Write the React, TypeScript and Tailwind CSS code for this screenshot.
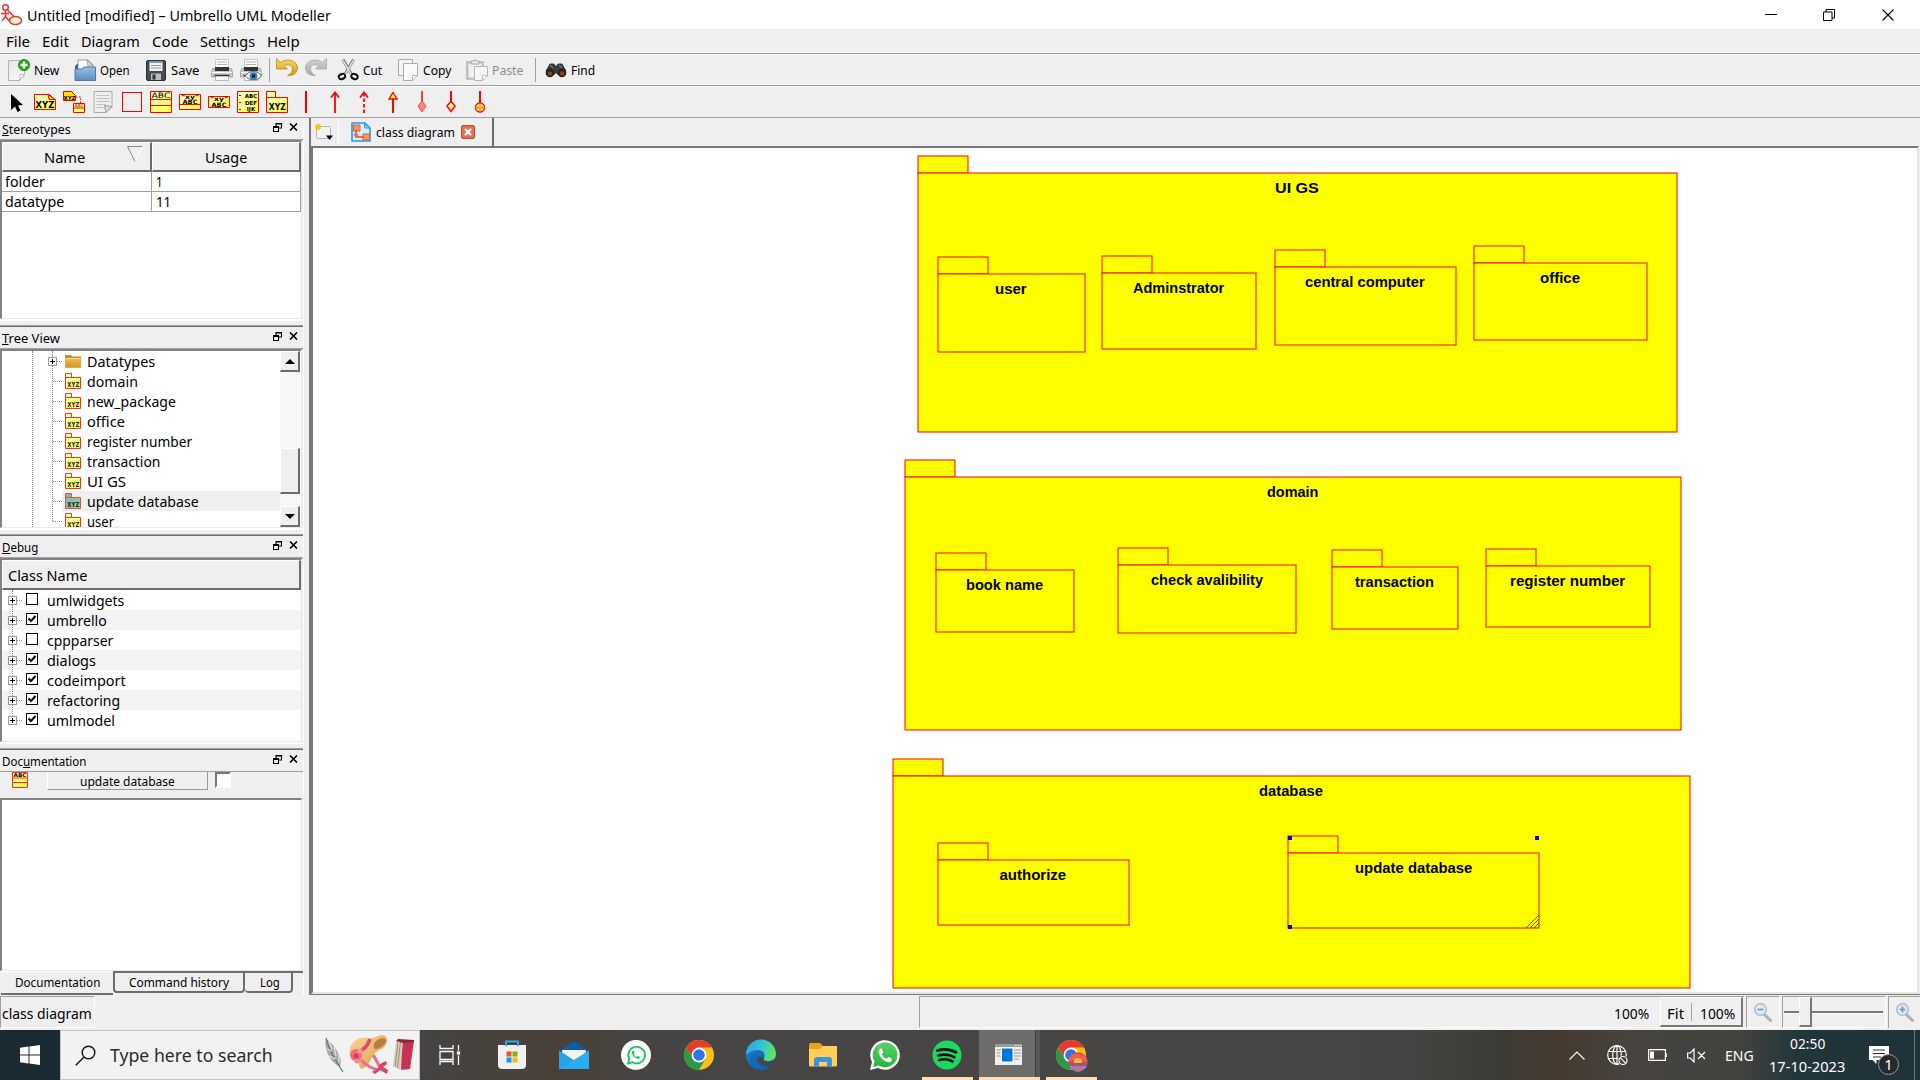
import React, { useLayoutEffect, useRef, useState } from "react";

/* Text set to an exact width, condensed or widened horizontally. */
function Fit({ w, className = "", children }: { w: number; className?: string; children: React.ReactNode }) {
  const ref = useRef<HTMLSpanElement>(null);
  const [scale, setScale] = useState(1);
  useLayoutEffect(() => {
    if (ref.current) setScale(w / ref.current.offsetWidth);
  }, [w]);
  return (
    <span className={"inline-block shrink-0 whitespace-nowrap text-left " + className} style={{ width: w }}>
      <span ref={ref} className="inline-block origin-left" style={{ transform: `scaleX(${scale})` }}>
        {children}
      </span>
    </span>
  );
}

const RED = "#ff0000";
const I = "block shrink-0 overflow-visible";

/* ---------- main toolbar icons ---------- */
const Defs = () => (
  <svg width="0" height="0" className="absolute">
    <defs>
      <linearGradient id="page" x1="0" y1="0" x2="1" y2="1"><stop offset="0" stopColor="#e4e4e4" /><stop offset="1" stopColor="#ffffff" /></linearGradient>
      <linearGradient id="blue" x1="0" y1="0" x2="0" y2="1"><stop offset="0" stopColor="#9dbfe2" /><stop offset="1" stopColor="#5d8cc2" /></linearGradient>
      <linearGradient id="yel" x1="0" y1="0" x2="1" y2="1"><stop offset="0" stopColor="#ffffd0" /><stop offset="1" stopColor="#ffff3c" /></linearGradient>
      <linearGradient id="gold" x1="0" y1="0" x2="0" y2="1"><stop offset="0" stopColor="#f6dc6a" /><stop offset="1" stopColor="#d59a14" /></linearGradient>
      <linearGradient id="silver" x1="0" y1="0" x2="0" y2="1"><stop offset="0" stopColor="#d2d2d2" /><stop offset="1" stopColor="#a8a8a8" /></linearGradient>
      <linearGradient id="fold" x1="0" y1="0" x2="0" y2="1"><stop offset="0" stopColor="#f3b84e" /><stop offset="1" stopColor="#d9951f" /></linearGradient>
      <linearGradient id="sel" x1="0" y1="0" x2="1" y2="1"><stop offset="0" stopColor="#7fb0d0" /><stop offset="1" stopColor="#a4cf78" /></linearGradient>
      <linearGradient id="edge1" x1="0" y1="0" x2="1" y2="0.3"><stop offset="0" stopColor="#2a9fe0" /><stop offset=".6" stopColor="#36c6d0" /><stop offset="1" stopColor="#62e06a" /></linearGradient>
      <linearGradient id="edge2" x1="0" y1="0" x2="1" y2="1"><stop offset="0" stopColor="#1c86d8" /><stop offset="1" stopColor="#0e4f9c" /></linearGradient>
      <linearGradient id="wa" x1="0" y1="0" x2="0" y2="1"><stop offset="0" stopColor="#5bd066" /><stop offset="1" stopColor="#27b43e" /></linearGradient>
      <linearGradient id="hat" x1="0" y1="0" x2="1" y2="1"><stop offset="0" stopColor="#ffd894" /><stop offset="1" stopColor="#d99a4c" /></linearGradient>
    </defs>
  </svg>
);
const NewIcon = () => (
  <svg className={I} width="22" height="22" viewBox="0 0 22 22">
    <path d="M.5 1.5h16v14l-5 6H.5z" fill="url(#page)" stroke="#b4b4b4" />
    <path d="M11.5 21.5l.5-6h4.500z" fill="#fff" stroke="#aaa" strokeWidth=".8" />
    <circle cx="16" cy="6" r="5.600" fill="#22a616" stroke="#158a10" strokeWidth=".8" />
    <path d="M16 2.500v7M12.500 6h7" stroke="#fff" strokeWidth="2.400" />
  </svg>
);
const OpenIcon = () => (
  <svg className={I} width="22" height="22" viewBox="0 0 22 22">
    <path d="M1 21V7l2-2h4v5z" fill="#3f669c" />
    <path d="M4 1h10l5 5v8H4z" fill="#fafafa" stroke="#888" strokeWidth=".8" />
    <path d="M13 1l1 6h5z" fill="#ddd" stroke="#999" strokeWidth=".8" />
    <path d="M1 10h7l2-2h11.500v13.500H1z" fill="url(#blue)" stroke="#46719f" strokeWidth=".9" />
  </svg>
);
const SaveIcon = () => (
  <svg className={I} width="20" height="21" viewBox="0 0 20 21">
    <rect x=".5" y=".5" width="19" height="20" rx="1.500" fill="#474b50" stroke="#2c2e31" />
    <rect x="3.500" y="1" width="13" height="10" fill="#f2f2f2" />
    <rect x="3.500" y="1" width="13" height="2" fill="#7c96b5" />
    <path d="M5 5.500h10M5 8h10" stroke="#999" />
    <rect x="5" y="13.500" width="10" height="6.500" fill="#b9bcc0" />
    <rect x="6.500" y="14.500" width="3" height="5" fill="#333" />
  </svg>
);
const PrintIcon = ({ eye = false }: { eye?: boolean }) => (
  <svg className={I} width="22" height="22" viewBox="0 0 22 22">
    <path d="M4.500 10V.5h13V10z" fill="#fafafa" stroke="#bbb" strokeWidth=".8" />
    <path d="M6 3h10M6 5.500h10" stroke="#b5b5b5" />
    <path d="M1.500 9.500h19l1 4v4.500H.5v-4.500z" fill="#c9c9c9" stroke="#999" strokeWidth=".8" />
    <path d="M4 8h14v4H4z" fill="#333" />
    <path d="M1 13.500h20" stroke="#fff" />
    <path d="M4.500 16.500h13v5h-13z" fill="#fafafa" stroke="#aaa" strokeWidth=".8" />
    <path d="M3.500 16.500h15" stroke="#333" strokeWidth="1.500" />
    {eye && (
      <>
        <path d="M5 17c4-6 13-6 16.500 0-3.500 5-12.500 5-16.500 0z" fill="#f4f4f4" stroke="#666" />
        <circle cx="13.500" cy="17" r="3.800" fill="#3a78b8" />
        <circle cx="13.500" cy="17" r="1.700" fill="#0b1c33" />
      </>
    )}
  </svg>
);
const UndoIcon = ({ redo = false }: { redo?: boolean }) => (
  <svg className={I} width="22" height="19" viewBox="0 0 22 19">
    <path
      transform={redo ? "translate(22 0) scale(-1 1)" : undefined}
      d="M.5.500v10.500h11L8.500 8c3-2.500 8-1 8 3 0 3-2 5-5 6.500 6 .500 10-2.500 10-7.500C21.500 2.500 11-.500 4.500 4.500z"
      fill={redo ? "url(#silver)" : "url(#gold)"}
      stroke={redo ? "#a9a9a9" : "#bf8a14"}
      strokeWidth=".8"
    />
  </svg>
);
const CutIcon = () => (
  <svg className={I} width="21" height="22" viewBox="0 0 21 22">
    <path d="M5 .5l8 14M15.500.500l-8 14" stroke="#777" strokeWidth="3" />
    <path d="M5 1l8 14M15.500 1l-8 14" stroke="#e6e6e6" strokeWidth="1.500" />
    <ellipse cx="4" cy="17.500" rx="3.300" ry="2.500" fill="none" stroke="#111" strokeWidth="2" transform="rotate(-25 4 17.500)" />
    <ellipse cx="16.500" cy="17.500" rx="3.300" ry="2.500" fill="none" stroke="#111" strokeWidth="2" transform="rotate(25 16.500 17.500)" />
  </svg>
);
const CopyIcon = () => (
  <svg className={I} width="20" height="22" viewBox="0 0 20 22">
    <path d="M.5.5h14v16H.5z" fill="#f4f4f4" stroke="#aaa" />
    <path d="M5.500 4.500h14v12l-5 5h-9z" fill="#fafafa" stroke="#aaa" />
    <path d="M14.500 21.500v-5h5z" fill="#fff" stroke="#aaa" strokeWidth=".8" />
  </svg>
);
const PasteIcon = () => (
  <svg className={I} width="22" height="22" viewBox="0 0 22 22">
    <path d="M1 3h16v17H1z" fill="#d9d9d9" stroke="#b5b5b5" strokeWidth="1.500" />
    <path d="M3 5h12v13H3z" fill="#f1f1f1" />
    <path d="M5 5V2h3l1-1.500L10 2h3v3z" fill="#ececec" stroke="#a5a5a5" />
    <path d="M8.500 7.500h13v9l-5 5h-8z" fill="#f6f6f6" stroke="#b5b5b5" />
    <path d="M16.500 21.500v-5h5z" fill="#fff" stroke="#b5b5b5" strokeWidth=".8" />
  </svg>
);
const FindIcon = () => (
  <svg className={I} width="22" height="15" viewBox="0 0 22 15">
    <path d="M1 8L5 1l4 0 1 2h2l1-2 4 0 4 7-3 4-6-1-1-3-1 3-6 1z" fill="#3c3c3c" stroke="#222" strokeWidth=".8" />
    <path d="M5 2l3 3M14 2l3 3" stroke="#999" />
    <circle cx="5" cy="10" r="4.300" fill="#222" />
    <circle cx="17" cy="10" r="4.300" fill="#222" />
    <circle cx="5" cy="10.500" r="2.300" fill="#8a4519" />
    <circle cx="17" cy="10.500" r="2.300" fill="#8a4519" />
  </svg>
);

/* ---------- drawing toolbar icons ---------- */
const itx = "font-['DejaVu_Sans'] font-bold";
const shapes: React.ReactNode[] = [
  <path d="M6 3v16l4-3.500 2.500 5.500 3-1.500-2.500-5 5-.500z" fill="#000" />,
  <>
    <path d="M.5 3.500h15l6 6v9H.5z" fill="url(#yel)" stroke={RED} />
    <path d="M14 3.500l1 5h6.500z" fill="#ffe000" stroke={RED} />
    <text x="11" y="17" textAnchor="middle" fontSize="8.500" className={itx}>XYZ</text>
  </>,
  <>
    <path d="M.5.5h8l4 4v5H.5z" fill="#ffe000" stroke={RED} />
    <text x="6.500" y="8.500" textAnchor="middle" fontSize="5.500" className={itx}>XYZ</text>
    <path d="M13 6h4.500v6" fill="none" stroke={RED} strokeDasharray="1.500 1.500" />
    <path d="M10.500 12.500h11v9h-11zM10.500 17h11" fill="url(#yel)" stroke={RED} />
    <text x="16" y="16.300" textAnchor="middle" fontSize="4" className={itx} fill="#a60">ABC</text>
  </>,
  <>
    <path d="M2 .5h18v15l-6 6H2z" fill="#efefef" stroke="#aaa" />
    <path d="M4.500 4.500h13M4.500 7.500h13M4.500 10.500h13M4.500 13.500h9M4.500 16.500h7" stroke="#b9c2cc" />
    <path d="M14 21.500l-1.500-7 7.500 1z" fill="#ddd" stroke="#999" />
  </>,
  <rect x="1.500" y="1.500" width="19" height="19" fill="none" stroke={RED} />,
  <>
    <path d="M.5.5h21v21H.5z" fill="url(#yel)" stroke={RED} />
    <path d="M.5 8.500h21M.5 14.500h21" stroke={RED} />
    <text x="11" y="7.200" textAnchor="middle" fontSize="7.500" textLength="19" lengthAdjust="spacingAndGlyphs" className="font-['DejaVu_Sans']">ABC</text>
  </>,
  <>
    <path d="M.5 3.500h21v15H.5z" fill="url(#yel)" stroke={RED} />
    <text x="11" y="8" textAnchor="middle" fontSize="6" textLength="18" lengthAdjust="spacingAndGlyphs" className={itx}>"xy"</text>
    <text x="11" y="12.500" textAnchor="middle" fontSize="6" textLength="15" lengthAdjust="spacingAndGlyphs" className={itx}>ABC</text>
    <path d="M.5 13.500h21" stroke={RED} />
  </>,
  <>
    <path d="M.5 5.500h21v11H.5z" fill="url(#yel)" stroke={RED} />
    <text x="11" y="10" textAnchor="middle" fontSize="6" textLength="18" lengthAdjust="spacingAndGlyphs" className={itx}>"xy"</text>
    <text x="11" y="15.500" textAnchor="middle" fontSize="6" textLength="15" lengthAdjust="spacingAndGlyphs" className={itx}>ABC</text>
  </>,
  <>
    <path d="M.5.5h21v21H.5z" fill="url(#yel)" stroke={RED} />
    <path d="M2 4.500h2M2 11.500h2M2 18.500h2" stroke="#333" />
    <text x="14" y="6.500" textAnchor="middle" fontSize="5.500" className={itx}>ABC</text>
    <text x="14" y="13.500" textAnchor="middle" fontSize="5.500" className={itx}>DEF</text>
    <text x="14" y="20.200" textAnchor="middle" fontSize="5.500" className={itx}>IJK</text>
  </>,
  <>
    <path d="M.5.5h9v6h12v15H.5zM.5 6.500h9" fill="url(#yel)" stroke={RED} />
    <text x="11.300" y="18.500" textAnchor="middle" fontSize="9" textLength="17" lengthAdjust="spacingAndGlyphs" className={itx}>XYZ</text>
  </>,
  <path d="M11 0v22" stroke={RED} strokeWidth="2" />,
  <path d="M11 22V1M7 6.500l4-5 4 5" fill="none" stroke={RED} strokeWidth="1.800" />,
  <>
    <path d="M11 22V2" stroke={RED} strokeWidth="1.800" strokeDasharray="3.500 2" />
    <path d="M7 6.500l4-5 4 5" fill="none" stroke={RED} strokeWidth="1.800" />
  </>,
  <>
    <path d="M11 22V8" stroke={RED} strokeWidth="2" />
    <path d="M11 1.500l4 6.500H7z" fill="#ffff50" stroke={RED} strokeWidth="1.400" />
  </>,
  <>
    <path d="M11 0v11" stroke={RED} strokeWidth="1.500" />
    <path d="M11 10l4 5-4 6-4-6z" fill="#ff8080" stroke="#ff4848" />
  </>,
  <>
    <path d="M11 0v11" stroke={RED} strokeWidth="2" />
    <path d="M11 10.500l4 4.500-4 5.500-4-5.500z" fill="#ffffa0" stroke={RED} strokeWidth="1.500" />
  </>,
  <>
    <path d="M11 0v12" stroke={RED} strokeWidth="2" />
    <circle cx="11" cy="16.500" r="4.500" fill="#ffe860" stroke={RED} strokeWidth="1.300" />
    <path d="M11 12v9M6.500 16.500h9" stroke="#f80" strokeWidth="1" />
  </>,
];

const Xyz = ({ sel = false }: { sel?: boolean }) => (
  <svg className={I} width="16" height="16" viewBox="0 0 16 16">
    <path d="M.5.500h6v4h9v11H.5z" fill={sel ? "url(#sel)" : "url(#yel)"} stroke={sel ? "#c85a50" : "#ff3010"} />
    <path d="M.5 4.500h6" stroke={sel ? "#c85a50" : "#ff3010"} />
    <text x="8.300" y="13.500" textAnchor="middle" fontSize="7" textLength="12" lengthAdjust="spacingAndGlyphs" className={itx} fill="#222">XYZ</text>
  </svg>
);

/* ---------- dock pieces ---------- */
const DockTitle = ({ children, w }: { children: React.ReactNode; w: number }) => (
  <div className="flex h-[21px] shrink-0 items-center pl-[2px] pr-[5px] text-[12.500px] leading-none">
    <Fit w={w} className="mt-[3px]">{children}</Fit>
    <div className="flex-1" />
    <svg className="mr-[7px] mb-[3px]" width="9" height="9" viewBox="0 0 9 9">
      <path d="M3 3V.5h5.500V5H6M.5 3.500h5v5h-5zM0 4.500h6M3 1h6" fill="none" stroke="#000" strokeWidth="1.100" />
    </svg>
    <svg className="mb-[3px]" width="9" height="8" viewBox="0 0 9 8">
      <path d="M1 .5l7 7M8 .5l-7 7" stroke="#000" strokeWidth="1.600" />
    </svg>
  </div>
);
const SUNK = "border-l-2 border-t-2 border-r border-b border-t-[#828282] border-l-[#828282] border-r-[#e8e8e8] border-b-[#e8e8e8] bg-white";
const HEAD = "border-b-2 border-r-2 border-b-[#6c6c6c] border-r-[#6c6c6c] border-l border-t border-l-white border-t-white bg-[#efefef]";
const Sep = () => <div className="h-[2px] shrink-0 border-b border-[#6e6e6e] bg-[#a0a0a0]" />;
const Plus = () => (
  <svg className="block shrink-0 bg-white" width="9" height="9" viewBox="0 0 9 9">
    <rect x=".5" y=".5" width="8" height="8" fill="#fff" stroke="#999" />
    <path d="M2 4.500h5M4.500 2v5" stroke="#000" />
  </svg>
);

const tree: [string, number][] = [
  ["Datatypes", 68], ["domain", 51], ["new_package", 89], ["office", 38], ["register number", 105],
  ["transaction", 73], ["UI GS", 39], ["update database", 112], ["user", 27],
];
const debug: [string, number, boolean][] = [
  ["umlwidgets", 77, false], ["umbrello", 60, true], ["cppparser", 66, false], ["dialogs", 49, true],
  ["codeimport", 79, true], ["refactoring", 73, true], ["umlmodel", 68, true],
];

/* ---------- diagram ---------- */
type Pkg = [string, number, number, number, number, number];
const packages: Pkg[] = [
  ["UI GS", 918, 156, 1677, 432, 44],
  ["user", 938, 257, 1085, 352, 32],
  ["Adminstrator", 1102, 256, 1256, 349, 91],
  ["central computer", 1275, 250, 1456, 345, 120],
  ["office", 1474, 246, 1647, 340, 40],
  ["domain", 905, 460, 1681, 730, 51],
  ["book name", 936, 553, 1074, 632, 77],
  ["check avalibility", 1118, 548, 1296, 633, 112],
  ["transaction", 1332, 550, 1458, 629, 79],
  ["register number", 1486, 549, 1650, 627, 115],
  ["database", 893, 759, 1690, 988, 64],
  ["authorize", 938, 843, 1129, 925, 67],
  ["update database", 1288, 836, 1539, 928, 117],
];
const ORIGIN_X = 312;
const ORIGIN_Y = 148;

function Package({ p }: { p: Pkg }) {
  const [name, x, y, r, b, tw] = p;
  const w = r - x;
  const h = b - y;
  return (
    <div className="absolute" style={{ left: x - ORIGIN_X, top: y - ORIGIN_Y, width: w, height: h }}>
      <svg className="absolute inset-0 overflow-visible" width={w} height={h}>
        <rect x="0" y="0" width="50" height="17" fill="#ffff00" stroke={RED} />
        <rect x="0" y="17" width={w} height={h - 17} fill="#ffff00" stroke={RED} />
      </svg>
      <div className="relative flex justify-center pt-[23px] pr-[1px] font-['Liberation_Sans'] text-[15px] font-bold leading-[18px]">
        <Fit w={tw}>{name}</Fit>
      </div>
    </div>
  );
}

/* ---------- taskbar icons ---------- */
const Chrome = () => (
  <svg className={I} width="30" height="30" viewBox="0 0 30 30">
    <circle cx="15" cy="15" r="15" fill="#fbc116" />
    <path d="M2 7.500A15 15 0 0 1 28 7.500H15L8.500 18.500z" fill="#e33b2e" />
    <path d="M2 7.500A15 15 0 0 0 15 30L21.500 18.700 15 22.500 8.500 18.700z" fill="#2a9a47" />
    <circle cx="15" cy="15" r="7.400" fill="#fff" />
    <circle cx="15" cy="15" r="5.800" fill="#2f74ea" />
  </svg>
);
const Store = () => (
  <svg className={I} width="28" height="30" viewBox="0 0 28 30">
    <path d="M0 5h28v20q0 4-4 4H4q-4 0-4-4z" fill="#f0f0f0" />
    <path d="M8 6V1.500h12V6" fill="none" stroke="#29a8e4" strokeWidth="2" />
    <path d="M8.500 11.500h5v5h-5z" fill="#f04e23" /><path d="M14.500 11.500h5v5h-5z" fill="#7cb900" />
    <path d="M8.500 17.500h5v5h-5z" fill="#00a3ee" /><path d="M14.500 17.500h5v5h-5z" fill="#ffb800" />
  </svg>
);
const Mail = () => (
  <svg className={I} width="30" height="28" viewBox="0 0 30 28">
    <path d="M0 10L15 0l15 10v3H0z" fill="#0b5cab" />
    <path d="M3 9h24v12H3z" fill="#f3f3f3" />
    <path d="M0 9.500l15 10 15-10V28H0z" fill="#1490df" />
    <path d="M0 28L30 9.500V28z" fill="#35b5f1" opacity=".75" />
    <path d="M0 9.500l15 10L0 28z" fill="#27a3ec" />
  </svg>
);
const phone = "M10.500 8.500c-2 1-2.500 3.500-1 6.500 1.800 3.500 4.500 6 8 7 2.500.700 4.500-.700 4.700-3l-3.700-2-1.800 2c-2.500-1-4-2.700-5-5l1.500-1.700-1.500-3.800z";
const WaLight = () => (
  <svg className={I} width="30" height="30" viewBox="0 0 30 30">
    <circle cx="15" cy="15" r="15" fill="#fff" />
    <path d="M7 23.500l1.300-4.500A8.300 8.300 0 1 1 11.500 22.300z" fill="none" stroke="#22c35e" strokeWidth="1.900" />
    <path transform="translate(5.800 5.500) scale(.6)" d={phone} fill="#22c35e" />
  </svg>
);
const WaGreen = () => (
  <svg className={I} width="30" height="30" viewBox="0 0 30 30">
    <path d="M0 30l2-8A14.800 14.800 0 1 1 8 28z" fill="#fff" />
    <path d="M3 27l1.600-5.500A12.400 12.400 0 1 1 8.800 25.500z" fill="url(#wa)" />
    <path d={phone} fill="#fff" />
  </svg>
);
const Edge = () => (
  <svg className={I} width="30" height="30" viewBox="0 0 30 30">
    <circle cx="15" cy="15" r="15" fill="url(#edge2)" />
    <path d="M0 15A15 15 0 0 1 30 14c0 5-4 7-8 7-3 0-5-1-4-3 2-4-1-8-6-8-6 0-10 3-12 5z" fill="url(#edge1)" />
    <path d="M11 17c0 6 5 9 10 9 3 0 5-.500 7-2l2-4-3 1.500c-6 2-11-.500-9-4z" fill="#474644" />
    <path d="M11 17c-1 7 5 13 12 10.500-6 4-16 3-18-6-1-5 2-9 6-9-1 1-1 3 0 4.500z" fill="#1268bd" />
  </svg>
);
const Explorer = () => (
  <svg className={I} width="28" height="25" viewBox="0 0 28 25">
    <path d="M0 1.500Q0 0 1.500 0H11l3 3-3 4H0z" fill="#e8a317" />
    <path d="M0 6h11l2.500-3H28v19q0 1.500-1.500 1.500h-25Q0 23.500 0 22z" fill="#ffcf58" />
    <path d="M5 24v-7q0-3 3-3h12q3 0 3 3v7h-5v-5h-8v5z" fill="#3f93d8" />
  </svg>
);
const Spotify = () => (
  <svg className={I} width="30" height="30" viewBox="0 0 30 30">
    <circle cx="15" cy="15" r="14.500" fill="#1ed760" />
    <path d="M5.500 10.500c6-1.800 13-1.300 18.500 1.800M6.500 15.500c5.500-1.600 11-1 15.800 1.600M7.500 20c4.500-1.300 9-.800 13 1.400" fill="none" stroke="#0a0a0a" strokeWidth="2.700" strokeLinecap="round" />
  </svg>
);
const WindowIcon = () => (
  <svg className={I} width="27" height="21" viewBox="0 0 27 21">
    <path d="M0 0h27v21H0z" fill="#efefef" /><path d="M0 0h27v3H0z" fill="#9a9a9a" />
    <path d="M20 1.500h1.500M22.500 1.500h1.500M25 1.500h1.500" stroke="#eee" />
    <path d="M1.500 6h4M1.500 9h4M1.500 12h4M19 6h7M19 9h7M19 12h7M19 15h5" stroke="#999" strokeWidth="1.200" />
    <path d="M6 3.500h12.500v15H6z" fill="#fff" /><path d="M7 4.500h10.500v13H7z" fill="#0078d7" />
  </svg>
);
const TaskView = () => (
  <svg className={I} width="22" height="20" viewBox="0 0 22 20">
    <path d="M1 0v3.500h13V0M1 6.500h13v8H1zM1 20v-3.500h13V20M19.500 0v20" fill="none" stroke="#fff" strokeWidth="1.300" />
    <rect x="17.500" y="6" width="4" height="4" fill="#fff" stroke="#474644" strokeWidth=".8" />
  </svg>
);

const tasks: { icon: React.ReactNode; state?: string }[] = [
  { icon: <TaskView /> }, { icon: <Store /> }, { icon: <Mail /> }, { icon: <WaLight /> }, { icon: <Chrome /> }, { icon: <Edge /> },
  { icon: <Explorer /> }, { icon: <WaGreen /> }, { icon: <Spotify />, state: "run" }, { icon: <WindowIcon />, state: "active" },
  {
    icon: (
      <div className="relative">
        <Chrome />
        <svg className="absolute left-[12px] top-[12px]" width="20" height="20" viewBox="0 0 20 20">
          <clipPath id="ava"><circle cx="10" cy="10" r="9.700" /></clipPath>
          <g clipPath="url(#ava)">
            <path d="M0 0h20v20H0z" fill="#e2483c" /><path d="M0 4q10-5 20 2v3H0z" fill="#f2604a" />
            <circle cx="10" cy="10" r="4" fill="#ffb93a" /><path d="M0 11h20v3H0z" fill="#8a5a8e" /><path d="M0 14h20v6H0z" fill="#9a86b8" />
            <path d="M4 15h10M6 17.500h9" stroke="#d95a6a" />
          </g>
        </svg>
      </div>
    ),
    state: "run",
  },
];

const Mag = ({ plus = false }: { plus?: boolean }) => (
  <svg className={I} width="18" height="19" viewBox="0 0 18 19">
    <path d="M10.500 11.500l6 6" stroke="#b0b0b0" strokeWidth="3" strokeLinecap="round" />
    <circle cx="6.500" cy="6.500" r="5.800" fill="#dfe9f4" stroke="#a9b4c0" strokeWidth="1.300" />
    <path d={plus ? "M3.500 6.500h6M6.500 3.500v6" : "M3.500 6.500h6"} stroke="#6d93c4" strokeWidth="1.600" />
  </svg>
);

function Tool({ w, icon, iw, label, lw, gap, dim = false }: { w: number; icon: React.ReactNode; iw: number; label?: string; lw?: number; gap?: number; dim?: boolean }) {
  return (
    <div className="flex shrink-0 items-center" style={{ width: w }}>
      <div className="shrink-0" style={{ width: iw + (gap ?? 0) }}>{icon}</div>
      {label && <Fit w={lw ?? 30} className={dim ? "text-[#8d8d8d]" : "text-black"}>{label}</Fit>}
    </div>
  );
}

export default function App() {
  return (
    <div className="flex h-[1080px] w-[1920px] flex-col overflow-hidden bg-[#efefef] font-['Noto_Sans',sans-serif] text-[15px] leading-[20px] text-black">
      <Defs />
      {/* title bar */}
      <div className="flex h-[29px] shrink-0 items-center bg-white pl-[1px]">
        <svg className={I} width="22" height="22" viewBox="0 0 22 22">
          <circle cx="4.500" cy="3.500" r="2.800" fill="#fff" stroke="#f03030" strokeWidth="1.500" />
          <path d="M4.500 6.500v6M0 9.500h8M1 17l3.500-4.500L8 17M6.500 6l7 7" fill="none" stroke="#f03030" strokeWidth="1.500" />
          <ellipse cx="14.500" cy="16.500" rx="6" ry="4" fill="#fff8c8" stroke="#f03030" strokeWidth="1.500" />
        </svg>
        <Fit w={304} className="ml-[4px]">Untitled [modified] – Umbrello UML Modeller</Fit>
        <div className="flex-1" />
        <svg className="mr-[46px]" width="12" height="12"><path d="M0 5.500h12" stroke="#000" /></svg>
        <svg className="mr-[47px]" width="12" height="12"><path d="M.5 3h8.500v8.500H.5zM3 3V.5h8.500V9H9" fill="none" stroke="#000" /></svg>
        <svg className="mr-[26px]" width="12" height="12"><path d="M.5.500l11 11M11.500.500l-11 11" stroke="#000" strokeWidth="1.100" /></svg>
      </div>
      {/* menu */}
      <div className="flex h-[25px] shrink-0 items-center border-b border-[#a0a0a0] pl-[6px]">
        <Fit w={24} className="mr-[12px]">File</Fit>
        <Fit w={27} className="mr-[12px]">Edit</Fit>
        <Fit w={59} className="mr-[12px]">Diagram</Fit>
        <Fit w={36} className="mr-[12px]">Code</Fit>
        <Fit w={55} className="mr-[12px]">Settings</Fit>
        <Fit w={33}>Help</Fit>
      </div>
      {/* main toolbar */}
      <div className="flex h-[32px] shrink-0 items-center border-b border-t border-b-[#a0a0a0] border-t-white pl-[8px] text-[13px]">
        <Tool w={66} icon={<NewIcon />} iw={22} gap={4} label="New" lw={25} />
        <Tool w={72} icon={<OpenIcon />} iw={22} gap={4} label="Open" lw={30} />
        <Tool w={65} icon={<SaveIcon />} iw={20} gap={5} label="Save" lw={28} />
        <Tool w={29} icon={<PrintIcon />} iw={22} />
        <Tool w={29} icon={<PrintIcon eye />} iw={22} />
        <div className="mr-[6px] h-[24px] w-px shrink-0 bg-[#a0a0a0]" />
        <div className="mb-[5px]"><Tool w={29} icon={<UndoIcon />} iw={22} /></div>
        <div className="mb-[5px]"><Tool w={33} icon={<UndoIcon redo />} iw={22} /></div>
        <Tool w={60} icon={<CutIcon />} iw={21} gap={4} label="Cut" lw={19} />
        <Tool w={68} icon={<CopyIcon />} iw={20} gap={5} label="Copy" lw={28} />
        <Tool w={69} icon={<PasteIcon />} iw={22} gap={4} label="Paste" lw={31} dim />
        <div className="mr-[9px] h-[24px] w-px shrink-0 bg-[#a0a0a0]" />
        <Tool w={66} icon={<FindIcon />} iw={22} gap={4} label="Find" lw={24} />
      </div>
      {/* drawing toolbar */}
      <div className="flex h-[32px] shrink-0 items-center border-b border-t border-b-[#a0a0a0] border-t-white pl-[1px]">
        {shapes.map((s, i) => (
          <div key={i} className="flex w-[29px] shrink-0 justify-center">
            <svg className={I} width="22" height="22" viewBox="0 0 22 22">{s}</svg>
          </div>
        ))}
      </div>

      <div className="flex h-[877px] shrink-0">
        {/* docks */}
        <div className="flex w-[304px] shrink-0 flex-col border-r border-white">
          <DockTitle w={69}><u>S</u>tereotypes</DockTitle>
          <div className="h-px shrink-0 bg-[#a0a0a0]" />
          <div className={"mr-[1px] h-[179px] shrink-0 " + SUNK}>
            <div className="flex h-[30px]">
              <div className={"flex w-[150px] items-center pl-[41px] " + HEAD}>
                <Fit w={41}>Name</Fit>
                <svg className="ml-[42px] mb-[5px]" width="17" height="17"><path d="M.5.5h15" stroke="#888" /><path d="M.5.5l7.500 15" stroke="#888" /><path d="M15.500.5L8 15.500" stroke="#fff" /></svg>
              </div>
              <div className={"flex w-[149px] items-center justify-center " + HEAD}><Fit w={42}>Usage</Fit></div>
            </div>
            {[["folder", 40, "1", 7], ["datatype", 59, "11", 15]].map((r) => (
              <div key={r[0]} className="flex h-[20px] w-[299px] border-b border-[#a0a0a0] leading-[19px]">
                <div className="w-[150px] border-r border-[#a0a0a0] pl-[3px]"><Fit w={r[1] as number}>{r[0]}</Fit></div>
                <div className="w-[149px] border-r border-[#a0a0a0] pl-[4px]"><Fit w={r[3] as number}>{r[2]}</Fit></div>
              </div>
            ))}
          </div>
          <div className="h-[6px] shrink-0 border-t-2 border-white" />
          <Sep />
          <DockTitle w={58}><u>T</u>ree View</DockTitle>
          <div className="h-px shrink-0 bg-[#a0a0a0]" />
          <div className={"mr-[1px] flex h-[179px] shrink-0 overflow-hidden " + SUNK}>
            <div className="relative h-full flex-1 overflow-hidden">
              <div className="absolute left-[30px] top-0 h-full border-l border-dotted border-[#888]" />
              <div className="absolute left-[50px] top-0 h-[170px] border-l border-dotted border-[#888]" />
              {tree.map(([n, w], i) => (
                <div key={n} className="relative flex h-[20px] items-center pl-[46px]">
                  <div className="w-[9px] shrink-0">{i === 0 && <Plus />}</div>
                  <div className={i === 0 ? "h-0 w-[5px] border-t border-dotted border-[#888]" : "-ml-[4px] h-0 w-[9px] border-t border-dotted border-[#888]"} />
                  <div className={"flex h-[20px] flex-1 items-center pl-[3px] " + (n === "update database" ? "bg-[#efefef]" : "")}>
                    {i === 0 ? (
                      <svg className={I} width="16" height="14" viewBox="0 0 16 14">
                        <path d="M0 1h6l1 1.500h9V13.500H0z" fill="#c88a2a" /><path d="M0 4.500h16v9H0z" fill="url(#fold)" /><path d="M0 4.500h16" stroke="#ffe0a0" />
                      </svg>
                    ) : (
                      <Xyz sel={n === "update database"} />
                    )}
                    <Fit w={w} className="ml-[6px]">{n}</Fit>
                  </div>
                </div>
              ))}
            </div>
            <div className="flex w-[20px] shrink-0 flex-col bg-[#f7f7f7]">
              <div className={"flex h-[21px] items-center justify-center " + HEAD}><svg width="10" height="5"><path d="M0 5L5 0l5 5z" /></svg></div>
              <div className="h-[76px]" />
              <div className={"h-[46px] " + HEAD} />
              <div className="h-[12px]" />
              <div className={"flex h-[21px] items-center justify-center " + HEAD}><svg width="10" height="5"><path d="M0 0l5 5 5-5z" /></svg></div>
            </div>
            <div className="w-px bg-white" />
          </div>
          <div className="h-[6px] shrink-0 border-t-2 border-white" />
          <Sep />
          <DockTitle w={36}><u>D</u>ebug</DockTitle>
          <div className="h-px shrink-0 bg-[#a0a0a0]" />
          <div className={"mr-[1px] h-[184px] shrink-0 " + SUNK}>
            <div className={"flex h-[30px] w-[299px] items-center pl-[5px] " + HEAD}><Fit w={79}>Class Name</Fit></div>
            <div className="relative">
              <div className="absolute left-[10px] top-0 h-[130px] border-l border-dotted border-[#888]" />
              {debug.map(([n, w, on], i) => (
                <div key={n} className={"flex h-[20px] items-center pl-[6px] " + (i % 2 ? "bg-[#f4f4f4]" : "")}>
                  <div className="relative"><Plus /></div>
                  <div className="h-0 w-[5px] border-t border-dotted border-[#888]" />
                  <svg className="mb-[3px] ml-[4px] shrink-0" width="12" height="12" viewBox="0 0 12 12">
                    <rect x=".5" y=".5" width="11" height="11" fill="#fff" stroke="#000" />
                    {on && <path d="M2.500 5.500L5 8l4.500-5" fill="none" stroke="#000" strokeWidth="2" />}
                  </svg>
                  <Fit w={w} className="ml-[9px]">{n}</Fit>
                </div>
              ))}
            </div>
          </div>
          <div className="h-[6px] shrink-0 border-t-2 border-white" />
          <Sep />
          <DockTitle w={84}>Doc<u>u</u>mentation</DockTitle>
          <div className="h-px shrink-0 bg-[#a0a0a0]" />
          <div className="flex h-[26px] shrink-0 items-start pl-[12px] text-[13px]">
            <svg className={I} width="16" height="16" viewBox="0 0 16 16">
              <path d="M.5.5h15v15H.5zM.5 6h15M.5 10.500h15" fill="url(#yel)" stroke="#ff3010" />
              <text x="8" y="5" textAnchor="middle" fontSize="5" textLength="13" lengthAdjust="spacingAndGlyphs" className={itx}>ABC</text>
            </svg>
            <div className="ml-[19px] flex h-[18px] w-[161px] items-center justify-center border-b border-l border-r border-b-[#999] border-l-white border-r-[#999]"><Fit w={95}>update database</Fit></div>
            <div className="ml-[7px] h-[16px] w-[16px] border-2 border-b-white border-l-[#777] border-r-white border-t-[#777] bg-white" />
          </div>
          <div className={"mr-[1px] h-[173px] shrink-0 " + SUNK} />
          <div className="flex h-[24px] shrink-0 items-start pl-[1px] text-[12.500px] leading-[20px]">
            <div className="flex h-[24px] w-[112px] items-center justify-center border-b-2 border-[#6c6c6c] border-t border-t-white pt-[1px]"><Fit w={85}>Documentation</Fit></div>
            <div className="flex h-[22px] w-[132px] items-center justify-center rounded-b-sm border-2 border-[#6c6c6c] pt-[1px]"><Fit w={100}>Command history</Fit></div>
            <div className="flex h-[22px] w-[48px] items-center justify-center rounded-b-sm border-b-2 border-r-2 border-t-2 border-[#6c6c6c] pl-[4px] pt-[1px]"><Fit w={20}>Log</Fit></div>
            <div className="h-[2px] flex-1 bg-[#6c6c6c]" />
          </div>
        </div>

        {/* document area */}
        <div className="ml-[5px] flex w-[1611px] shrink-0 flex-col border-l-2 border-[#777]">
          <div className="flex h-[28px] shrink-0 items-center text-[13px]">
            <svg className="ml-[3px] shrink-0" width="19" height="18" viewBox="0 0 19 18">
              <rect x="2.500" y="3.500" width="14" height="12" rx="1" fill="#f3f3f3" stroke="#b5b5b5" />
              <circle cx="4" cy="4" r="3" fill="#f5c400" opacity=".9" />
              <path d="M12 12.500h7L15.500 17z" fill="#000" />
            </svg>
            <div className="ml-[5px] flex h-full w-[156px] items-center border-l border-r-2 border-l-white border-r-[#6c6c6c] pl-[12px]">
              <svg className={I} width="20" height="20" viewBox="0 0 20 20">
                <path d="M1 1h13l5 5v13H1z" fill="#d6ecff" stroke="#2a96f0" strokeWidth="1.600" />
                <path d="M13 1l1 5h5z" fill="#9ad0ff" stroke="#2a96f0" />
                <path d="M2.500 3H9v6H2.500zM12 12h6.500v6H12z" fill="#f39a5a" stroke="#e06030" />
                <path d="M5 8v7h8" fill="none" stroke="#e04a20" strokeWidth="1.400" /><circle cx="5" cy="13" r="2" fill="#e8743a" />
              </svg>
              <Fit w={79} className="ml-[5px]">class diagram</Fit>
              <svg className="ml-[6px] shrink-0" width="14" height="14" viewBox="0 0 14 14">
                <rect x=".5" y=".5" width="13" height="13" rx="1.500" fill="#e2714c" stroke="#b9492a" /><path d="M4 4l6 6M10 4l-6 6" stroke="#fff" strokeWidth="2.300" />
              </svg>
            </div>
          </div>
          <div className="relative h-[848px] w-[1608px] overflow-hidden border-2 border-b-[#e4e4e4] border-l-[#777] border-r-[#e4e4e4] border-t-[#777] bg-white">
            <div className="absolute left-[-1px] top-0 h-0 w-0">
              {packages.map((p) => <Package key={p[0]} p={p} />)}
              <svg className="absolute overflow-visible" width="1" height="1" style={{ left: 1288 - ORIGIN_X, top: 836 - ORIGIN_Y }}>
                <path d="M0 0h4v4H0zM247 0h4v4h-4zM0 89h4v4H0z" fill="#0000ff" />
                <path d="M238 92l13-13M242 92l9-9M246 92l5-5" stroke="#555500" />
              </svg>
            </div>
          </div>
          <div className="h-px bg-[#777]" />
        </div>
      </div>

      {/* status bar */}
      <div className="flex h-[35px] shrink-0 items-start pt-[1px]">
        <div className="flex h-[32px] w-[95px] shrink-0 items-center border border-b-white border-l-[#a0a0a0] border-r-white border-t-[#a0a0a0] pl-[1px] pt-[2px]"><Fit w={90}>class diagram</Fit></div>
        <div className="ml-[824px] flex h-[32px] w-[825px] shrink-0 items-center justify-end border border-b-white border-l-[#a0a0a0] border-r-0 border-t-[#a0a0a0]">
          <Fit w={35} className="mr-[11px] pt-[2px]">100%</Fit>
          <div className="flex h-[30px] w-[83px] items-center border-b-2 border-r-2 border-l border-t border-b-[#777] border-l-white border-r-[#777] border-t-white pl-[6px] mr-[1px]">
            <Fit w={17} className="pt-[2px]">Fit</Fit>
            <div className="ml-[7px] h-[18px] w-px bg-[#a0a0a0]" />
            <Fit w={35} className="ml-[8px] pt-[2px]">100%</Fit>
          </div>
        </div>
        <div className="ml-[2px] flex h-[32px] w-[34px] shrink-0 items-center justify-center border border-b-white border-l-[#a0a0a0] border-r-white border-t-[#a0a0a0]"><Mag /></div>
        <div className="ml-[2px] flex h-[32px] w-[104px] shrink-0 items-center border border-b-white border-l-[#a0a0a0] border-r-white border-t-[#a0a0a0] pl-[1px]">
          <div className="h-[3px] w-[15px] border-t-2 border-[#777] border-b border-b-white" />
          <div className="h-[30px] w-[13px] border-b-2 border-r-2 border-l border-t border-b-[#777] border-l-white border-r-[#777] border-t-white" />
          <div className="h-[3px] w-[71px] border-t-2 border-[#777] border-b border-b-white" />
        </div>
        <div className="ml-[2px] flex h-[32px] flex-1 items-center justify-center border-l border-t border-[#a0a0a0]"><Mag plus /></div>
      </div>

      {/* taskbar */}
      <div className="flex h-[50px] shrink-0 bg-[linear-gradient(90deg,#1a2932_0px,#1c2b33_60px,#454442_420px,#4a4038_560px,#464543_640px,#474644_1100px,#464543_1400px,#3d3b36_1500px,#453a30_1560px,#474440_1640px,#42423f_1740px,#22353a_1800px,#1f3238_1920px)] text-white">
        <div className="flex w-[60px] shrink-0 items-center justify-center">
          <svg width="20" height="20" viewBox="0 0 20 20"><path d="M0 2.800L8.500 1.500v8H0zM9.500 1.400L20 0v9.500H9.500zM0 10.500h8.500v8L0 17.200zM9.500 10.500H20V20L9.500 18.600z" fill="#fff" /></svg>
        </div>
        <div className="flex w-[360px] shrink-0 items-center border border-[#c4c4c4] bg-[#f2f2f2] pl-[14px] text-[#2b2b2b]">
          <svg width="21" height="21" viewBox="0 0 21 21"><circle cx="13.500" cy="7.500" r="6.300" fill="none" stroke="#1a1a1a" strokeWidth="1.500" /><path d="M9 12L.8 20.200" stroke="#1a1a1a" strokeWidth="1.500" /></svg>
          <Fit w={163} className="ml-[14px] text-[18px]">Type here to search</Fit>
          <svg className="ml-[52px] shrink-0" width="90" height="42" viewBox="0 0 90 42">
            <path d="M1 4c1 3 6 4 9 10 3 4 5 8 6 13l-1 6C9 30 4 24 2 18 0 12 0 8 1 4z" fill="#a9a9a9" />
            <path d="M1 4c3 12 8 20 17 34" fill="none" stroke="#6e6e6e" strokeWidth="1.200" />
            <path d="M4 8l3 7M9 13l2 9M14 20l0 9M2 15l5 2M4 22l7 3" stroke="#e4e4e4" strokeWidth="1.200" />
            <path d="M25 14C27 6 36 2 44 4c5 1 8-3 14-3 5 1 5 7 2 11-3 4-8 4-11 8-4 6-5 12-12 15-3-1-3-5-4-8-5-2-10-6-8-13z" fill="url(#hat)" />
            <path d="M50 8c3-4 10-5 11-2s-5 8-9 9-4-4-2-7z" fill="#b97c40" />
            <path d="M31 19C37 17 43 12 45 5" fill="none" stroke="#dd4a6c" strokeWidth="3.500" />
            <path d="M36 26c6 6 11 9 18 10M48 21c3 4 5 9 7 13" fill="none" stroke="#e8708c" strokeWidth="3" />
            <path d="M53 34l-6 4 3 2 5-4 7 4 1-4-5-3 4-3-1-3-6 3z" fill="#d94468" />
            <circle cx="31" cy="21" r="6" fill="#f4687a" /><circle cx="31" cy="22" r="2.600" fill="#d93a58" /><circle cx="35" cy="17" r="2.500" fill="#f79aa0" /><circle cx="32" cy="27" r="2.500" fill="#f08a94" />
            <path d="M77 8l12-1-4 28-9 1z" fill="#c93055" />
            <path d="M71 7l7 1-3 28-7-4z" fill="#d9cdb8" /><path d="M73 8l-3 25M75.500 8l-3 26" stroke="#8e7f6a" strokeWidth=".8" />
            <path d="M71 7l2-2 16 1v2l-11 1z" fill="#8f2340" />
          </svg>
        </div>
        <div className="-ml-px flex shrink-0">
          {tasks.map((t, i) => (
            <div key={i} className="flex w-[62.150px] shrink-0 justify-center">
              {t.state === "active" ? (
                <div className="flex w-[61px] border-b-[3px] border-[#ffdcb2]">
                  <div className="flex w-[56px] items-center justify-center bg-[#6d6c6b] pl-[4px] pt-[2px]">{t.icon}</div>
                  <div className="w-px bg-[#3e3e3c]" />
                  <div className="flex-1 bg-[#585755]" />
                </div>
              ) : t.state === "run" ? (
                <div className="flex w-[51px] items-center justify-center border-b-[3px] border-[#ffdcb2] pt-[3px]">{t.icon}</div>
              ) : (
                <div className="flex items-center">{t.icon}</div>
              )}
            </div>
          ))}
        </div>
        <div className="flex-1" />
        <div className="flex w-[351px] shrink-0 items-center">
          <svg className="shrink-0" width="16" height="9"><path d="M.5 8.500l7.500-7.500 7.500 7.500" fill="none" stroke="#fff" strokeWidth="1.200" /></svg>
          <svg className="ml-[22px] shrink-0" width="21" height="21" viewBox="0 0 21 21">
            <g fill="none" stroke="#fff" strokeWidth="1.200"><circle cx="10" cy="10" r="9.300" /><ellipse cx="10" cy="10" rx="4.300" ry="9.300" /><path d="M1 6.500h18M1 13.500h12M10 1v18" /></g>
            <circle cx="16" cy="15.500" r="5.200" fill="#444340" /><circle cx="16" cy="15.500" r="4" fill="none" stroke="#fff" strokeWidth="1.200" /><path d="M13.200 12.700l5.600 5.600" stroke="#fff" strokeWidth="1.200" />
          </svg>
          <svg className="ml-[20px] shrink-0" width="20" height="12"><path d="M.6.600h16.800v10.800H.6z" fill="none" stroke="#fff" strokeWidth="1.200" /><path d="M18 4v4" stroke="#fff" strokeWidth="1.600" /><path d="M2 2.500h4v7H2z" fill="#fff" /></svg>
          <svg className="ml-[19px] shrink-0" width="20" height="15"><path d="M.6 5h2.800L7 1v13L3.400 10H.6zM11 4l7 7M18 4l-7 7" fill="none" stroke="#fff" strokeWidth="1.200" /></svg>
          <Fit w={29} className="ml-[18px]">ENG</Fit>
          <div className="ml-[14px] flex w-[78px] flex-col items-center leading-[23px]">
            <Fit w={35}>02:50</Fit><Fit w={76}>17-10-2023</Fit>
          </div>
          <div className="relative ml-[23px] shrink-0">
            <svg width="20" height="20" viewBox="0 0 20 20"><path d="M0 1h20v14H7.500V19l-4-4H0z" fill="#fff" /><path d="M4 5h12M4 8.500h12M4 12h8" stroke="#22343a" strokeWidth="1.200" /></svg>
            <div className="absolute left-[9px] top-[9px] flex h-[21px] w-[21px] items-center justify-center rounded-full border border-[#999] bg-[#26292b] text-[15px] leading-none">1</div>
          </div>
          <div className="ml-[25px] h-full w-px bg-[#6f7b7e]" />
        </div>
      </div>
    </div>
  );
}
